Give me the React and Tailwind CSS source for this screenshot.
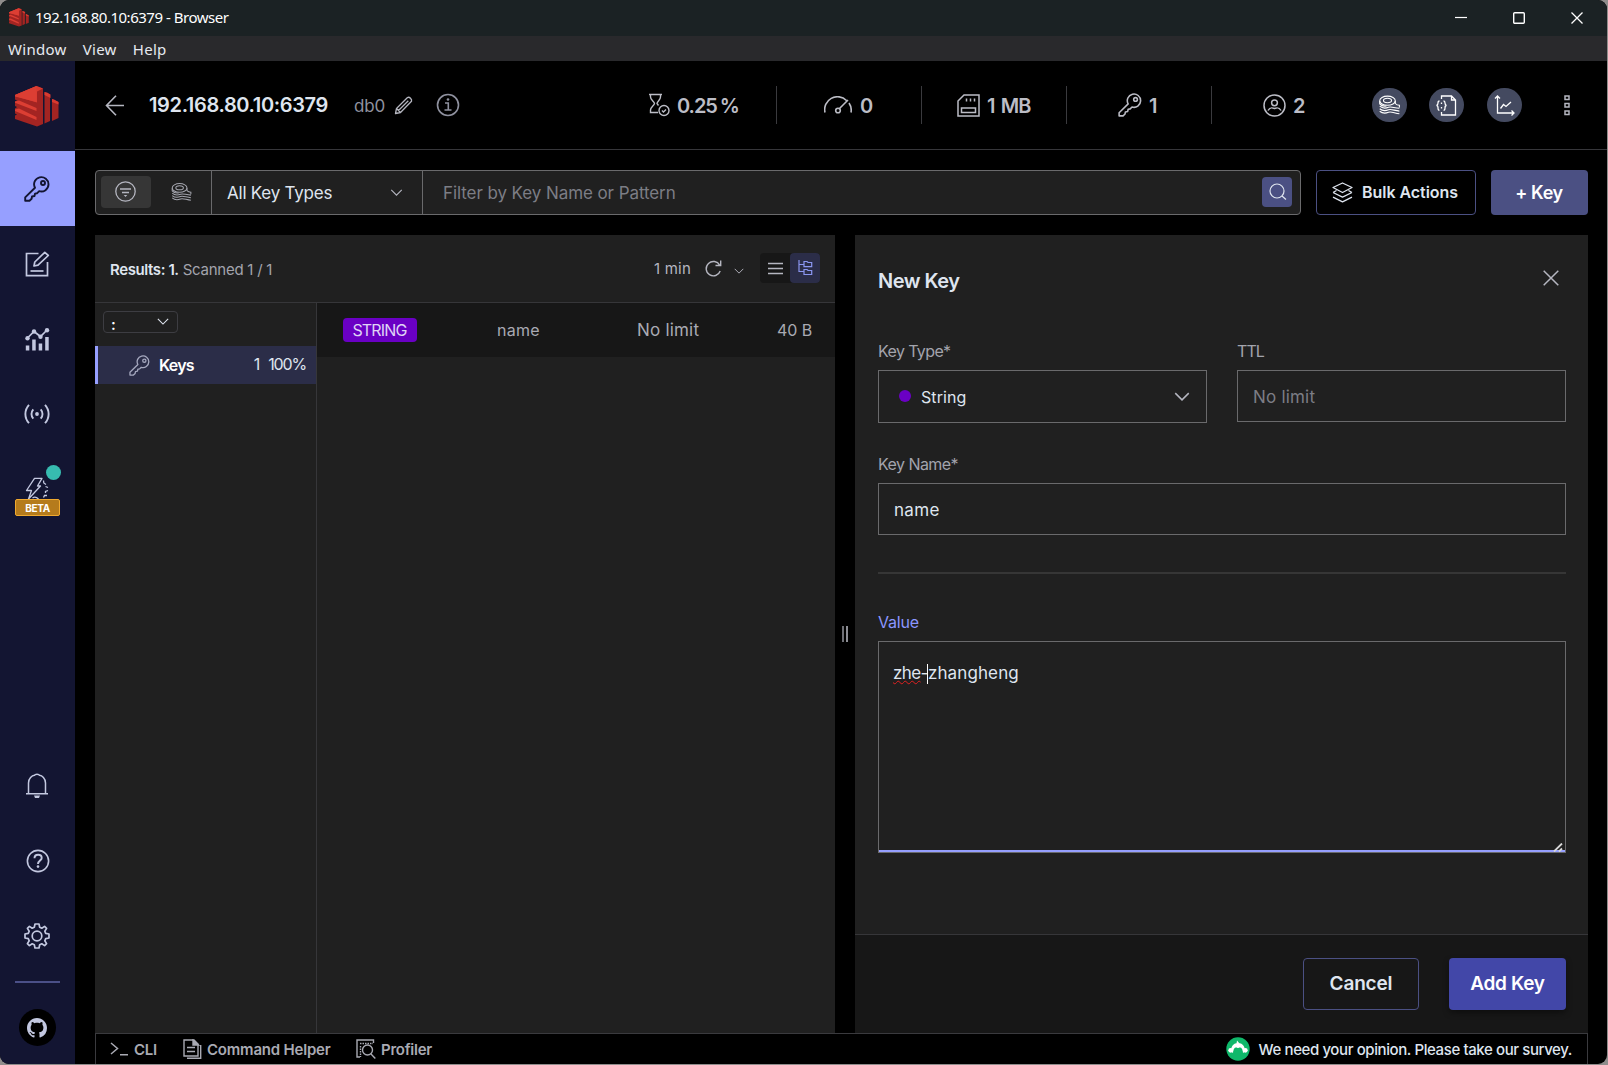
import React from "react";

const Svg = ({ w, h, className = "", sw = 1.5, children }) => (
  <svg width={w} height={h} viewBox={`0 0 ${w} ${h}`} fill="none" stroke="currentColor" strokeWidth={sw} className={"block shrink-0 " + className}>
    {children}
  </svg>
);

const RedisLogo = ({ w, h, className = "" }) => (
  <svg width={w} height={h} viewBox="0 0 44 41" className={"block shrink-0 " + className}>
    <path d="M0 9 21.500 0 28 2.500V38L22 40.500 0 33V29.500L2 28.500 0 27.500V22.500L2 21 0 20V15.500L2 14.500 0 13.500Z" fill="#a32422" />
    <path d="M0 9 21.500 0 28 2.500 22 5.500V16.500L0 10Z" fill="#d93a30" />
    <path d="M0 9 21.500 0V16L0 10.500Z" fill="#dc3e33" />
    <path d="M0 15.500 4 14.500 21.500 22V25L0 16.800ZM0 23.500 4 22.500 21.500 31V34L0 25Z" fill="#dc3e33" />
    <path d="M29.500 6 35 8.500V35L29.500 37.500ZM37 13 43.500 16V32L37 35Z" fill="#a32422" />
    <path d="M29.500 6 32 6.500 35.500 8.500V12L29.500 9ZM37 13 39 13.500 43.500 16V18.500L37 16Z" fill="#d93a30" />
  </svg>
);

const KeyIcon = ({ size = 26, sw = 2, className = "" }) => (
  <svg width={size} height={size} viewBox="0 0 26 26" fill="none" stroke="currentColor" strokeWidth={sw} strokeLinejoin="round" className={"block shrink-0 " + className}>
    <path d="M11 11.800A7.200 7.200 0 1 1 15.200 15.200L13.200 17.200 11 17.600 10.500 20 8 20.500 7.600 22.800 5.500 24.800H1.200V21.400Z" />
    <circle cx="19" cy="7" r="2" />
  </svg>
);

const RollIcon = ({ className = "", w = 21, h = 19, sw = 1.1 }) => (
  <svg width={w} height={h} viewBox="0 0 21 19" fill="none" stroke="currentColor" strokeWidth={sw} className={"block shrink-0 " + className}>
    <ellipse cx="8.500" cy="5.200" rx="7.800" ry="4.600" />
    <ellipse cx="8.500" cy="5" rx="4" ry="2.200" />
    <path d="M.7 5.500V8.300C2 10 4.500 10.900 7.500 10.500M16.300 5.500V8C17.500 9.300 19 9.700 20.400 9.700V12M.7 10.700C4 13.500 7 12.800 9.500 11.800S15 12.500 20.400 12.800M.7 13.300C4 16 7 15.300 9.500 14.300S15 15 20.400 15.600M.7 15.800C4 18.500 7 17.800 9.500 16.800S15 17.500 20.400 18.300" />
  </svg>
);

const Chevron = ({ w = 14, h = 8, className = "", sw = 1.3 }) => (
  <svg width={w} height={h} viewBox="0 0 14 8" fill="none" stroke="currentColor" strokeWidth={sw} className={"block shrink-0 " + className}>
    <path d="M1 1 7 7 13 1" />
  </svg>
);

const NavItem = ({ children, active }) => (
  <div className={"flex h-[75px] w-full shrink-0 items-center justify-center pr-px " + (active ? "bg-[#969fff] text-[#131532]" : "text-[#c3c8e0]")}>{children}</div>
);

function Sidebar() {
  return (
    <nav className="flex w-[75px] shrink-0 flex-col bg-[#131532]">
      <div className="flex h-[90px] shrink-0 items-center justify-center pr-px">
        <RedisLogo w={44} h={41} className="mt-px" />
      </div>
      <NavItem active><KeyIcon size={26} sw={1.900} /></NavItem>
      <NavItem>
        <Svg w={25} h={26} sw={1.700}>
          <path d="M13.500 2.500H1.500V24.700H22.500V11" />
          <path d="M9 15 9.800 11 19.800 1.300 23.300 4.500 13 14.200Z" strokeLinejoin="round" />
          <path d="M5.500 20H18.500" />
        </Svg>
      </NavItem>
      <NavItem>
        <Svg w={25} h={24} sw={1.700} className="mt-[2px]">
          <path d="M2.500 10 9 3.500 15.500 8.500 22 2" />
          <g fill="currentColor" stroke="none">
            <circle cx="2.500" cy="10.300" r="2.200" /><circle cx="9" cy="3.500" r="2.200" /><circle cx="15.500" cy="8.700" r="2.200" /><circle cx="22" cy="2.300" r="2.200" />
            <path d="M.8 17.500H4.300V22.500H.8ZM7.200 11.500H10.700V22.500H7.200ZM13.700 15.500H17.200V22.500H13.700ZM20.200 9H23.700V22.500H20.200Z" />
          </g>
        </Svg>
      </NavItem>
      <NavItem>
        <Svg w={26} h={20} sw={1.900}>
          <circle cx="13" cy="10" r="1.900" fill="currentColor" stroke="none" />
          <path d="M9.300 5.300A7 7 0 0 0 9.300 14.700M16.700 5.300A7 7 0 0 1 16.700 14.700M5 .8A13.500 13.500 0 0 0 5 19.200M21 .8A13.500 13.500 0 0 1 21 19.200" />
        </Svg>
      </NavItem>
      <div className="relative flex h-[75px] shrink-0 justify-center pr-px text-[#c3c8e0]">
        <Svg w={24} h={24} sw={1.300} className="mt-[26px]">
          <path d="M9.500 1.300H17L12.500 9H15.500L3.500 22 6.500 13.500H1.500Z" strokeLinejoin="round" />
          <path d="M18.500 3.500 18.800 6 21 7.500M20.500 9.500 23 10.500M23 13.500 20.500 14.500V16M22 18.500 19.500 18.500 18.500 20.500M7.500 21C9.500 19.500 11.500 20 13.500 22" />
        </Svg>
        <div className="absolute left-[46px] top-[14px] h-[15px] w-[15px] rounded-full bg-[#37bbb0]" />
        <div className="absolute left-[15px] top-[48px] flex h-[17px] w-[45px] items-center justify-center rounded-[2px] border border-[#f0a92f] bg-[#b57b1c] text-[10px] font-bold leading-none tracking-[-0.300px] text-white">BETA</div>
      </div>
      <div className="grow" />
      <NavItem>
        <Svg w={24} h={26} sw={1.500} className="mt-px">
          <path d="M1 20.700H23M3.500 20.500V10C3.500 5.500 7 2.600 9.500 2.300 10 .8 14 .8 14.500 2.300 17 2.600 20.500 5.500 20.500 10V20.500" />
          <path d="M9 22.500H15L14 25H10Z" fill="currentColor" stroke="none" />
        </Svg>
      </NavItem>
      <NavItem>
        <Svg w={24} h={24} sw={1.600} className="ml-px">
          <circle cx="12" cy="12" r="10.600" />
          <path d="M8.500 9.300C8.500 4.500 15.700 4.800 15.700 9 15.700 11.500 12 11.800 12 15" strokeWidth="1.900" />
          <circle cx="12" cy="17.600" r="1.300" fill="currentColor" stroke="none" />
        </Svg>
      </NavItem>
      <NavItem>
        <Svg w={26} h={26} sw={1.700} className="mt-px">
          <circle cx="13" cy="13" r="4.800" />
          <path strokeLinejoin="round" d="M11 1H15L15.700 4.300 17.800 5.200 20.600 3.400 22.600 5.400 20.800 8.200 21.700 10.300 25 11V15L21.700 15.700 20.800 17.800 22.600 20.600 20.600 22.600 17.800 20.800 15.700 21.700 15 25H11L10.300 21.700 8.200 20.800 5.400 22.600 3.400 20.600 5.200 17.800 4.300 15.700 1 15V11L4.300 10.300 5.200 8.200 3.400 5.400 5.400 3.400 8.200 5.200 10.300 4.300Z" />
        </Svg>
      </NavItem>
      <div className="mx-[15px] mt-[8px] h-[2px] shrink-0 bg-[#4b5088]" />
      <div className="flex h-[81px] shrink-0 justify-center pr-px pt-[26px]">
        <div className="flex h-[37px] w-[37px] items-center justify-center rounded-full bg-black text-[#c3c8e0]">
          <svg width="20" height="20" viewBox="0 0 16 16" fill="currentColor" className="block">
            <path d="M8 0C3.580 0 0 3.580 0 8c0 3.540 2.290 6.530 5.470 7.590.4.070.550-.170.550-.380 0-.190-.010-.820-.010-1.490-2.010.370-2.530-.490-2.690-.940-.090-.230-.480-.940-.820-1.130-.280-.150-.680-.520-.010-.530.630-.010 1.080.580 1.230.820.720 1.210 1.870.870 2.330.660.070-.520.280-.870.510-1.070-1.780-.2-3.640-.890-3.640-3.950 0-.870.310-1.590.820-2.150-.080-.2-.360-1.020.080-2.120 0 0 .670-.210 2.200.820.640-.180 1.320-.270 2-.270s1.360.090 2 .270c1.530-1.040 2.200-.820 2.200-.820.440 1.100.160 1.920.080 2.120.510.560.820 1.270.820 2.150 0 3.070-1.870 3.750-3.650 3.950.290.250.540.730.540 1.480 0 1.070-.010 1.930-.010 2.200 0 .210.150.460.550.380A8.010 8.010 0 0 0 16 8c0-4.420-3.580-8-8-8Z" />
          </svg>
        </div>
      </div>
    </nav>
  );
}

const Stat = ({ className = "", icon, children, tracking }) => (
  <div className={"flex w-[145px] shrink-0 items-center text-[#bcbdc6] " + className}>
    {icon}
    <span className={"mt-px text-[20px] font-semibold leading-none " + tracking}>{children}</span>
  </div>
);

const Divider = () => <div className="-mr-px h-[38px] w-px shrink-0 bg-[#3a3a3e]" />;

const RoundButton = ({ children, className = "" }) => (
  <div className={"flex h-[34px] w-[35px] shrink-0 items-center justify-center rounded-full bg-[#444a60] text-white " + className}>{children}</div>
);

function Header() {
  return (
    <header className="flex h-[89px] shrink-0 items-center border-b border-[#36363a] text-[#b5b6c0]">
      <Svg w={20} h={21} sw={1.600} className="ml-[30px]"><path d="M11 .8 1.500 10.500 11 20.200M1.500 10.500H19" /></Svg>
      <div className="ml-[24px] w-[205px] text-[20px] font-semibold leading-none tracking-[-0.360px] text-[#dfe5ef]">192.168.80.10:6379</div>
      <div className="mt-[3px] w-[40px] text-[17px] leading-none tracking-[-0.200px] text-[#8f919f]">db0</div>
      <Svg w={19} h={19} sw={1.300}>
        <path d="M1.500 17.500 2.500 12.500 13.500 1.500Q15 .8 16.500 2.300T17.500 5.300L6.500 16.500ZM4.500 14.500 14.300 4.700M2.500 12.500 6.500 16.500" strokeLinejoin="round" />
      </Svg>
      <Svg w={24} h={24} sw={1.600} className="ml-[23px] text-[#8f919f]">
        <circle cx="12" cy="12" r="10.500" />
        <path d="M9 10H12.300V17M8.500 17H15.500" />
        <circle cx="12" cy="6.500" r="1.300" fill="currentColor" stroke="none" />
      </Svg>
      <div className="grow" />
      <Stat className="pl-[18px]" tracking="tracking-[-1.050px] [word-spacing:-1px]" icon={
        <Svg w={21} h={24} sw={1.400} className="mr-[7px]">
          <path d="M0 1.500H13M1.500 1.500V4C1.500 7 5.500 8.500 5.500 10.500S1.500 14 1.500 17V19.500H9M11.500 1.500V4C11.500 7 8 8.500 8 10.500L9.500 12.500" />
          <circle cx="15" cy="17.500" r="5" /><path d="M13 17.500 14.500 19 17 16.500" />
        </Svg>}>0.25 %</Stat>
      <Divider />
      <Stat className="pl-[48px]" icon={
        <Svg w={28} h={18} sw={1.600} className="mr-[8px] -mt-px">
          <path d="M1 16.500A12.800 12.800 0 0 1 22.500 4.500M25 7A12.800 12.800 0 0 1 27 16.500M15.500 12.500 24 4" /><circle cx="14" cy="14.500" r="2.300" />
        </Svg>}>0</Stat>
      <Divider />
      <Stat className="pl-[36px]" tracking="tracking-[-0.900px] [word-spacing:2px]" icon={
        <Svg w={23} h={23} sw={1.500} className="mr-[7px]">
          <path d="M1 7 7 1H22V22H1ZM4.500 14H18.500V18.500H4.500ZM9.500 4.500V7.500M13.500 4.500V7.500M17.500 4.500V7.500" />
        </Svg>}>1 MB</Stat>
      <Divider />
      <Stat className="pl-[52px]" icon={<KeyIcon size={24} sw={1.700} className="mr-[7px]" />}>1</Stat>
      <Divider />
      <Stat className="pl-[52px]" icon={
        <Svg w={23} h={23} sw={1.500} className="mr-[7px]">
          <circle cx="11.500" cy="11.500" r="10.500" /><circle cx="11.500" cy="8.800" r="2.900" /><path d="M5 16.500C7 13 9 13.500 11.500 14.500 14 13.500 16 13 18 16.500" />
        </Svg>}>2</Stat>
      <RoundButton className="ml-[16px]"><RollIcon w={21} h={20} sw={1.100} /></RoundButton>
      <RoundButton className="ml-[22px]">
        <Svg w={21} h={21} sw={1.300}>
          <path d="M5.500 4V1H15.500L19.500 5V20H5.500V17M15.500 1V5H19.500" />
          <path d="M3.500 6Q2 6 2 8T.5 10.500Q2 10.500 2 13T3.500 15M7.500 6Q9 6 9 8T10.500 10.500Q9 10.500 9 13T7.500 15" />
          <path d="M5.500 7.500V9M5.500 12V13.500" />
        </Svg>
      </RoundButton>
      <RoundButton className="ml-[23px]">
        <Svg w={21} h={21} sw={1.300} className="-ml-px"><path d="M3.500 1V18H20M1 3.500 3.500 1 6 3.500M17.500 15.500 20 18 17.500 20.500M6.500 13.500 9.500 9.500 12 11.500 17 7" /></Svg>
      </RoundButton>
      <Svg w={6} h={21} sw={1.500} className="ml-[42px] mr-[37px]"><path d="M1 1H5V4.500H1ZM1 8.500H5V12H1ZM1 16H5V19.500H1Z" /></Svg>
    </header>
  );
}

function Toolbar() {
  return (
    <div className="flex h-[45px]">
      <div className="flex w-[1206px] items-center rounded-[4px] border border-[#6a6a6c] bg-[#202020]">
        <div className="flex h-full w-[116px] items-center border-r border-[#6a6a6c] pl-[5px]">
          <div className="-mt-px flex h-8 w-[50px] items-center justify-center rounded-[4px] bg-[#363636] pr-px text-[#b5b6c0]">
            <Svg w={21} h={21} sw={1.300} className="-mt-px"><circle cx="10.500" cy="10.500" r="9.700" /><path d="M5 8H16M7 11.500H14" /><path d="M8.700 14H12.300L10.500 16Z" fill="currentColor" stroke="none" /></Svg>
          </div>
          <RollIcon w={21} h={18} className="ml-[20px] -mt-px text-[#a3a4ad]" />
        </div>
        <div className="flex h-full w-[211px] items-center border-r border-[#6a6a6c] pl-[15px] pt-[2px] text-[17px] tracking-[-0.230px] text-[#dfe5ef]">
          All Key Types
          <Chevron w={13} h={7} className="-mt-[2px] ml-auto mr-[19px] text-[#b5b6c0]" />
        </div>
        <div className="grow pl-[20px] pt-[2px] text-[17px] tracking-[-0.080px] text-[#7c7d85]">Filter by Key Name or Pattern</div>
        <div className="-mt-px mr-[8px] flex h-[30px] w-[30px] items-center justify-center rounded-[4px] bg-[#4b5083] pl-px text-[#dfe5ef]">
          <Svg w={18} h={18} sw={1.200}><circle cx="8" cy="8" r="7" /><path d="M13 13 17 16.500" /></Svg>
        </div>
      </div>
      <div className="ml-[15px] flex w-[160px] items-center rounded-[4px] border border-[#4b5083] pl-[15px] text-[#dfe5ef]">
        <Svg w={21} h={21} sw={1.300} className="mr-[9px] -mt-px"><path d="M10.500 1 20 5.500 10.500 10.500 1 5.500ZM1 10.500 10.500 15.200 20 10.500M1 15.200 10.500 19.900 20 15.200M4.500 8.500 1 10.500M16.500 8.500 20 10.500" strokeLinejoin="round" /></Svg>
        <span className="-mt-px text-[16px] font-semibold tracking-[-0.040px]">Bulk Actions</span>
      </div>
      <div className="ml-[15px] flex w-[97px] items-center justify-center rounded-[4px] bg-[#4b5083] pr-px text-[18px] font-semibold tracking-[-0.400px] text-white">+ Key</div>
    </div>
  );
}

function KeysPanel() {
  return (
    <section className="flex w-[740px] shrink-0 flex-col bg-[#202020]">
      <div className="flex h-[68px] shrink-0 items-center border-b border-[#363639] pl-[15px] pr-[15px] text-[15px] text-[#b5b6c0]">
        <span className="mt-[3px] font-semibold tracking-[-0.400px] text-[#dfe5ef]">Results: 1.</span>
        <span className="ml-[4px] mt-[3px] tracking-[-0.250px] text-[#a3a4ad]">Scanned 1 / 1</span>
        <span className="ml-auto mr-[14px] mt-[2px] tracking-[0.200px]">1 min</span>
        <Svg w={17} h={18} sw={1.400}><path d="M14.700 5.200A7.200 7.200 0 1 0 15.200 11M15.700 .5V5.500H10.500" /></Svg>
        <Chevron w={10} h={6} className="ml-[12px] mr-[16px] mt-[4px]" />
        <div className="-mt-px flex h-[30px] rounded-[4px] bg-[#171717]">
          <div className="flex w-[30px] items-center justify-center"><Svg w={15} h={13} sw={1.700}><path d="M0 1.500H15M0 6.500H15M0 11.500H15" /></Svg></div>
          <div className="flex w-[30px] items-center justify-center rounded-[4px] bg-[#2b2d48] text-[#8b96f0]">
            <Svg w={15} h={16} sw={1.200} className="ml-px"><path d="M1 0V11.500H6M1 4.500H6M6 1.500H9L10 2.500H13.700V6.700H6ZM6 9.500H9L10 10.500H13.700V14.500H6Z" /></Svg>
          </div>
        </div>
      </div>
      <div className="flex grow">
        <div className="flex w-[222px] shrink-0 flex-col border-r border-[#363639]">
          <div className="ml-[8px] mt-[8px] flex h-[22px] w-[75px] items-center justify-between rounded-[4px] border border-[#3d3d42] pl-[7px] pr-[8px] text-[15px] font-semibold text-white">
            <span className="mt-[4px] leading-none">:</span>
            <Chevron w={12} h={7} className="-mt-px text-[#dfe5ef]" />
          </div>
          <div className="mt-[13px] flex h-[38px] items-center border-l-[3px] border-[#969fff] bg-[#2b2d48] pl-[31px] pr-[10px] text-[16px] text-[#dfe5ef]">
            <KeyIcon size={21} sw={1.600} className="text-[#a6a9bf]" />
            <span className="ml-[9px] text-[16px] font-semibold tracking-[-0.800px] text-white">Keys</span>
            <span className="-mt-[2px] ml-auto">1</span>
            <span className="-mt-[2px] ml-[8px] tracking-[-1.150px]">100%</span>
          </div>
        </div>
        <div className="grow">
          <div className="flex h-[54px] items-center bg-[#171717] pl-[26px] text-[16px] text-[#a9aab3]">
            <div className="flex h-6 w-[74px] items-center justify-center rounded-[4px] bg-[#6a00c4] pr-px tracking-[-0.850px] text-[#dfd3f5]">STRING</div>
            <span className="ml-[80px] w-[140px] tracking-[0.300px]">name</span>
            <span className="mt-px w-[140px] text-[17px] tracking-[0.200px]">No limit</span>
            <span className="tracking-[-0.100px]">40 B</span>
          </div>
        </div>
      </div>
    </section>
  );
}

function NewKeyPanel() {
  return (
    <section className="flex w-[733px] shrink-0 flex-col bg-[#202020]">
      <div className="grow pl-[23px] pr-[22px] text-[16px] text-[#a3a4ad]">
        <div className="flex h-[92px] items-center justify-between pr-[7px]">
          <h2 className="text-[20px] font-semibold leading-none tracking-[-0.500px] text-[#dfe5ef]">New Key</h2>
          <Svg w={16} h={16} sw={1.500} className="-mt-[7px] text-[#b5b6c0]"><path d="M.7.700 15.300 15.300M15.300.700.7 15.300" /></Svg>
        </div>
        <div className="grid h-[113px] grid-cols-2 gap-[30px] pt-[12px]">
          <div>
            <div className="h-[31px] leading-6 tracking-[-0.620px]">Key Type*</div>
            <div className="flex h-[53px] items-center border border-[#6a6a6c] pl-[20px] pr-[16px] text-[#dfe5ef]">
              <div className="-mt-px h-3 w-3 rounded-full bg-[#6a00c4]" />
              <span className="ml-[10px] tracking-[0.100px]">String</span>
              <Chevron w={16} h={9} className="-mt-px ml-auto text-[#b5b6c0]" />
            </div>
          </div>
          <div>
            <div className="h-[31px] leading-6 tracking-[-0.900px]">TTL</div>
            <div className="flex h-[52px] items-center border border-[#6a6a6c] pl-[15px] pt-[3px] text-[17px] tracking-[0.200px] text-[#7c7d85]">No limit</div>
          </div>
        </div>
        <div className="pt-[12px]">
          <div className="h-[31px] leading-6 tracking-[-0.550px]">Key Name*</div>
          <div className="flex h-[52px] items-center border border-[#6a6a6c] pl-[15px] pt-[3px] text-[17px] tracking-[0.300px] text-[#dfe5ef]">name</div>
        </div>
        <div className="mt-[37px] h-[2px] bg-[#363636]" />
        <div className="mt-[36px] h-[31px] leading-6 tracking-[-0.170px] text-[#8b96ff]">Value</div>
        <div className="relative h-[212px] border border-[#6a6a6c] pl-[14px] pt-[19px] text-[17px] leading-6 text-[#dfe5ef] shadow-[inset_0_-2px_0_#969fff]">
          <span className="underline decoration-[#e02020] decoration-wavy decoration-1 underline-offset-[1px] tracking-[-0.600px]">zhe</span>
          <span className="tracking-[-1.500px]">-</span>
          <span className="inline-block h-[20px] w-px bg-white align-middle" />
          <span className="tracking-[0.120px]">zhangheng</span>
          <Svg w={10} h={9} sw={1.800} className="absolute bottom-0 right-[2px] text-[#d8d8d8]"><path d="M1 8.500 9 .5M6 8.500 9 5.500" /></Svg>
        </div>
      </div>
      <div className="flex h-[99px] shrink-0 justify-end border-t border-[#363639] bg-[#171717] pr-[22px] pt-[23px] text-[19px] font-semibold">
        <div className="flex h-[52px] w-[116px] items-center justify-center rounded-[4px] border border-[#4b5083] tracking-[-0.150px] text-[#dfe5ef]">Cancel</div>
        <div className="ml-[30px] flex h-[52px] w-[117px] items-center justify-center rounded-[4px] bg-[#4247a8] tracking-[-0.320px] text-white shadow-[0_3px_6px_rgba(0,0,0,0.4)]">Add Key</div>
      </div>
    </section>
  );
}

function BottomBar() {
  return (
    <footer className="flex h-[31px] shrink-0 items-center border border-b-0 border-[#3a3a3e] pl-[14px] pr-[15px] text-[15px] font-semibold leading-none text-[#a9aab3]">
      <Svg w={18} h={14} sw={1.500} className="mr-[6px]"><path d="M1 1 7.500 6.500 1 12M10 12.700H18" /></Svg>
      <span className="w-[49px] tracking-[-0.300px]">CLI</span>
      <Svg w={19} h={20} sw={1.400} className="mr-[5px]">
        <path d="M1 1H11L15 5V17H1ZM4 8.500H12M4 12.500H12M17.700 6V19.300H4" /><path d="M10 1 15.500 6H10Z" fill="currentColor" />
      </Svg>
      <span className="w-[149px] tracking-[-0.200px]">Command Helper</span>
      <Svg w={20} h={20} sw={1.400} className="mr-[5px]">
        <path d="M4 18H1V1H17.500V4" /><path d="M4 4.500H17M4.500 7V18" strokeDasharray="1.500 1" /><circle cx="11.500" cy="11" r="5" /><path d="M15 15 19.300 19.500" />
      </Svg>
      <span className="tracking-[-0.250px]">Profiler</span>
      <svg width="24" height="24" viewBox="0 0 24 24" className="-mt-px ml-auto mr-[9px] block shrink-0">
        <circle cx="12" cy="12" r="11.700" fill="#0fb86a" />
        <path d="M5 14.500C5 10.500 6.500 6 12 6S19 10.500 19 14.500L17 16C17 12.500 15.500 10.500 14 10.500 13 10.500 12.500 11 12 11S11 10.500 10 10.500C8.500 10.500 7 12.500 7 16Z" fill="#fff" />
        <circle cx="4.700" cy="13.300" r="2.400" fill="#fff" /><circle cx="19.300" cy="13.300" r="2.400" fill="#fff" /><path d="M11 3.500 13.500 6.500H10.500Z" fill="#fff" />
      </svg>
      <span className="font-medium tracking-[-0.400px] text-[#dfe5ef]">We need your opinion. Please take our survey.</span>
    </footer>
  );
}

export default function App() {
  return (
    <div className="h-[1065px] w-[1608px] overflow-hidden bg-[#8f8d8c] font-['Inter',sans-serif]">
      <div className="flex h-[1064px] w-[1607px] flex-col overflow-hidden rounded-[9px] bg-black">
        <div className="flex h-9 shrink-0 items-center bg-[#1b2224] pl-[9px] font-['Noto_Sans',sans-serif] text-[15px] text-white">
          <RedisLogo w={20} h={19} className="-mt-[2px]" />
          <span className="-mt-px ml-[6px] leading-none tracking-[-0.480px]">192.168.80.10:6379 - Browser</span>
          <div className="ml-auto mr-[24px] flex items-center gap-[46px]">
            <Svg w={12} h={12} sw={1.200}><path d="M0 5.500H12" /></Svg>
            <Svg w={12} h={12} sw={1.400}><rect x=".7" y=".7" width="10.600" height="10.600" rx="1" /></Svg>
            <Svg w={12} h={12} sw={1.300}><path d="M.5.500 11.500 11.500M11.500.500.5 11.500" /></Svg>
          </div>
        </div>
        <div className="flex h-[25px] shrink-0 items-center gap-[16px] bg-[#29292c] pl-[8px] pt-px font-['Noto_Sans',sans-serif] text-[15px] leading-none tracking-[0.300px] text-[#e6e9f0]">
          <span>Window</span><span>View</span><span>Help</span>
        </div>
        <div className="flex min-h-0 grow">
          <Sidebar />
          <main className="flex grow flex-col">
            <Header />
            <div className="flex grow flex-col pl-[20px] pr-[19px] pt-[20px]">
              <Toolbar />
              <div className="mt-[20px] flex grow">
                <KeysPanel />
                <div className="flex w-[20px] shrink-0 items-center justify-center gap-[2px]">
                  <div className="h-4 w-[2px] bg-[#6f7076]" /><div className="h-4 w-[2px] bg-[#8d8e95]" />
                </div>
                <NewKeyPanel />
              </div>
              <BottomBar />
            </div>
          </main>
        </div>
      </div>
    </div>
  );
}
